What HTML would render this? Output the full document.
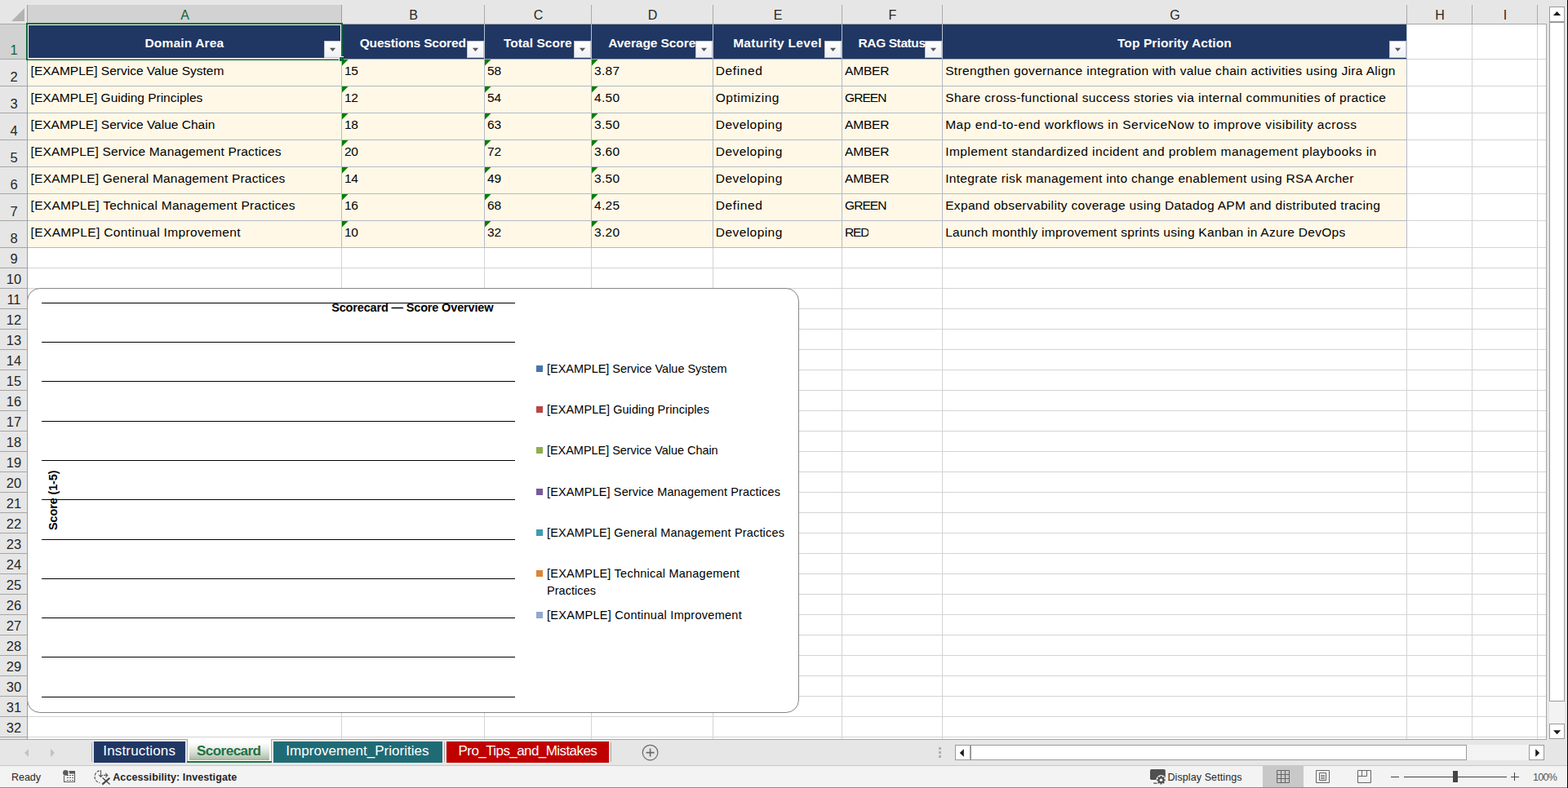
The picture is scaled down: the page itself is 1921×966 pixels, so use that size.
<!DOCTYPE html>
<html lang="en"><head><meta charset="utf-8"><title>Scorecard</title>
<style>
html,body{margin:0;padding:0;background:#E6E6E6}
body{width:1921px;height:966px;position:relative;overflow:hidden;font-family:"Liberation Sans", sans-serif}
div,svg{position:absolute;box-sizing:content-box}
.t{white-space:pre}
.fb{width:19px;height:19px;border:1px solid #C4C4C4;background:linear-gradient(#fff,#EEF0F5)}
.sb{width:17px;height:17px;border:1px solid #9A9A9A;background:#fff}
</style></head>
<body>
<div id="sheet" style="left:0;top:0">
<div style="left:0px;top:0px;width:1921px;height:966px;background:#E6E6E6;"></div>
<div style="left:34px;top:30px;width:1860px;height:876px;background:#fff;"></div>
<div style="left:418px;top:30px;width:1px;height:876px;background:#D4D4D4;"></div>
<div style="left:593px;top:30px;width:1px;height:876px;background:#D4D4D4;"></div>
<div style="left:724px;top:30px;width:1px;height:876px;background:#D4D4D4;"></div>
<div style="left:873px;top:30px;width:1px;height:876px;background:#D4D4D4;"></div>
<div style="left:1031px;top:30px;width:1px;height:876px;background:#D4D4D4;"></div>
<div style="left:1154px;top:30px;width:1px;height:876px;background:#D4D4D4;"></div>
<div style="left:1723px;top:30px;width:1px;height:876px;background:#D4D4D4;"></div>
<div style="left:1803px;top:30px;width:1px;height:876px;background:#D4D4D4;"></div>
<div style="left:1883px;top:30px;width:1px;height:876px;background:#D4D4D4;"></div>
<div style="left:34px;top:72px;width:1860px;height:1px;background:#D4D4D4;"></div>
<div style="left:34px;top:105px;width:1860px;height:1px;background:#D4D4D4;"></div>
<div style="left:34px;top:138px;width:1860px;height:1px;background:#D4D4D4;"></div>
<div style="left:34px;top:171px;width:1860px;height:1px;background:#D4D4D4;"></div>
<div style="left:34px;top:204px;width:1860px;height:1px;background:#D4D4D4;"></div>
<div style="left:34px;top:237px;width:1860px;height:1px;background:#D4D4D4;"></div>
<div style="left:34px;top:270px;width:1860px;height:1px;background:#D4D4D4;"></div>
<div style="left:34px;top:303px;width:1860px;height:1px;background:#D4D4D4;"></div>
<div style="left:34px;top:328px;width:1860px;height:1px;background:#D4D4D4;"></div>
<div style="left:34px;top:353px;width:1860px;height:1px;background:#D4D4D4;"></div>
<div style="left:34px;top:378px;width:1860px;height:1px;background:#D4D4D4;"></div>
<div style="left:34px;top:403px;width:1860px;height:1px;background:#D4D4D4;"></div>
<div style="left:34px;top:428px;width:1860px;height:1px;background:#D4D4D4;"></div>
<div style="left:34px;top:453px;width:1860px;height:1px;background:#D4D4D4;"></div>
<div style="left:34px;top:478px;width:1860px;height:1px;background:#D4D4D4;"></div>
<div style="left:34px;top:503px;width:1860px;height:1px;background:#D4D4D4;"></div>
<div style="left:34px;top:528px;width:1860px;height:1px;background:#D4D4D4;"></div>
<div style="left:34px;top:553px;width:1860px;height:1px;background:#D4D4D4;"></div>
<div style="left:34px;top:578px;width:1860px;height:1px;background:#D4D4D4;"></div>
<div style="left:34px;top:603px;width:1860px;height:1px;background:#D4D4D4;"></div>
<div style="left:34px;top:628px;width:1860px;height:1px;background:#D4D4D4;"></div>
<div style="left:34px;top:653px;width:1860px;height:1px;background:#D4D4D4;"></div>
<div style="left:34px;top:678px;width:1860px;height:1px;background:#D4D4D4;"></div>
<div style="left:34px;top:703px;width:1860px;height:1px;background:#D4D4D4;"></div>
<div style="left:34px;top:728px;width:1860px;height:1px;background:#D4D4D4;"></div>
<div style="left:34px;top:753px;width:1860px;height:1px;background:#D4D4D4;"></div>
<div style="left:34px;top:778px;width:1860px;height:1px;background:#D4D4D4;"></div>
<div style="left:34px;top:803px;width:1860px;height:1px;background:#D4D4D4;"></div>
<div style="left:34px;top:828px;width:1860px;height:1px;background:#D4D4D4;"></div>
<div style="left:34px;top:853px;width:1860px;height:1px;background:#D4D4D4;"></div>
<div style="left:34px;top:878px;width:1860px;height:1px;background:#D4D4D4;"></div>
<div style="left:34px;top:903px;width:1860px;height:1px;background:#D4D4D4;"></div>
<div style="left:34px;top:30px;width:1689px;height:42px;background:#203764;"></div>
<div style="left:34px;top:73px;width:1689px;height:230px;background:#FFF8E7;"></div>
<div style="left:418px;top:30px;width:1px;height:42px;background:#B9C0CE;"></div>
<div style="left:418px;top:72px;width:1px;height:232px;background:#B4BAC7;"></div>
<div style="left:593px;top:30px;width:1px;height:42px;background:#B9C0CE;"></div>
<div style="left:593px;top:72px;width:1px;height:232px;background:#B4BAC7;"></div>
<div style="left:724px;top:30px;width:1px;height:42px;background:#B9C0CE;"></div>
<div style="left:724px;top:72px;width:1px;height:232px;background:#B4BAC7;"></div>
<div style="left:873px;top:30px;width:1px;height:42px;background:#B9C0CE;"></div>
<div style="left:873px;top:72px;width:1px;height:232px;background:#B4BAC7;"></div>
<div style="left:1031px;top:30px;width:1px;height:42px;background:#B9C0CE;"></div>
<div style="left:1031px;top:72px;width:1px;height:232px;background:#B4BAC7;"></div>
<div style="left:1154px;top:30px;width:1px;height:42px;background:#B9C0CE;"></div>
<div style="left:1154px;top:72px;width:1px;height:232px;background:#B4BAC7;"></div>
<div style="left:1723px;top:30px;width:1px;height:42px;background:#B9C0CE;"></div>
<div style="left:1723px;top:72px;width:1px;height:232px;background:#B4BAC7;"></div>
<div style="left:34px;top:72px;width:1690px;height:1px;background:#A8A8A8;"></div>
<div style="left:34px;top:105px;width:1690px;height:1px;background:#B4BAC7;"></div>
<div style="left:34px;top:138px;width:1690px;height:1px;background:#B4BAC7;"></div>
<div style="left:34px;top:171px;width:1690px;height:1px;background:#B4BAC7;"></div>
<div style="left:34px;top:204px;width:1690px;height:1px;background:#B4BAC7;"></div>
<div style="left:34px;top:237px;width:1690px;height:1px;background:#B4BAC7;"></div>
<div style="left:34px;top:270px;width:1690px;height:1px;background:#B4BAC7;"></div>
<div style="left:34px;top:303px;width:1690px;height:1px;background:#B4BAC7;"></div>
<div style="left:34px;top:6px;width:384px;height:23px;background:#D2D2D2;"></div>
<div style="left:33px;top:6px;width:1px;height:23px;background:#9E9E9E;"></div>
<div style="left:418px;top:6px;width:1px;height:23px;background:#9E9E9E;"></div>
<div style="left:593px;top:6px;width:1px;height:23px;background:#ABABAB;"></div>
<div style="left:724px;top:6px;width:1px;height:23px;background:#ABABAB;"></div>
<div style="left:873px;top:6px;width:1px;height:23px;background:#ABABAB;"></div>
<div style="left:1031px;top:6px;width:1px;height:23px;background:#ABABAB;"></div>
<div style="left:1154px;top:6px;width:1px;height:23px;background:#ABABAB;"></div>
<div style="left:1723px;top:6px;width:1px;height:23px;background:#ABABAB;"></div>
<div style="left:1803px;top:6px;width:1px;height:23px;background:#ABABAB;"></div>
<div style="left:1883px;top:6px;width:1px;height:23px;background:#ABABAB;"></div>
<div style="left:0px;top:29px;width:1895px;height:1px;background:#A6A6A6;"></div>
<div style="left:0px;top:30px;width:33px;height:42px;background:#D2D2D2;"></div>
<div style="left:33px;top:30px;width:1px;height:876px;background:#9E9E9E;"></div>
<div style="left:0px;top:72px;width:33px;height:1px;background:#A6A6A6;"></div>
<div style="left:0px;top:105px;width:33px;height:1px;background:#A6A6A6;"></div>
<div style="left:0px;top:138px;width:33px;height:1px;background:#A6A6A6;"></div>
<div style="left:0px;top:171px;width:33px;height:1px;background:#A6A6A6;"></div>
<div style="left:0px;top:204px;width:33px;height:1px;background:#A6A6A6;"></div>
<div style="left:0px;top:237px;width:33px;height:1px;background:#A6A6A6;"></div>
<div style="left:0px;top:270px;width:33px;height:1px;background:#A6A6A6;"></div>
<div style="left:0px;top:303px;width:33px;height:1px;background:#A6A6A6;"></div>
<div style="left:0px;top:328px;width:33px;height:1px;background:#A6A6A6;"></div>
<div style="left:0px;top:353px;width:33px;height:1px;background:#A6A6A6;"></div>
<div style="left:0px;top:378px;width:33px;height:1px;background:#A6A6A6;"></div>
<div style="left:0px;top:403px;width:33px;height:1px;background:#A6A6A6;"></div>
<div style="left:0px;top:428px;width:33px;height:1px;background:#A6A6A6;"></div>
<div style="left:0px;top:453px;width:33px;height:1px;background:#A6A6A6;"></div>
<div style="left:0px;top:478px;width:33px;height:1px;background:#A6A6A6;"></div>
<div style="left:0px;top:503px;width:33px;height:1px;background:#A6A6A6;"></div>
<div style="left:0px;top:528px;width:33px;height:1px;background:#A6A6A6;"></div>
<div style="left:0px;top:553px;width:33px;height:1px;background:#A6A6A6;"></div>
<div style="left:0px;top:578px;width:33px;height:1px;background:#A6A6A6;"></div>
<div style="left:0px;top:603px;width:33px;height:1px;background:#A6A6A6;"></div>
<div style="left:0px;top:628px;width:33px;height:1px;background:#A6A6A6;"></div>
<div style="left:0px;top:653px;width:33px;height:1px;background:#A6A6A6;"></div>
<div style="left:0px;top:678px;width:33px;height:1px;background:#A6A6A6;"></div>
<div style="left:0px;top:703px;width:33px;height:1px;background:#A6A6A6;"></div>
<div style="left:0px;top:728px;width:33px;height:1px;background:#A6A6A6;"></div>
<div style="left:0px;top:753px;width:33px;height:1px;background:#A6A6A6;"></div>
<div style="left:0px;top:778px;width:33px;height:1px;background:#A6A6A6;"></div>
<div style="left:0px;top:803px;width:33px;height:1px;background:#A6A6A6;"></div>
<div style="left:0px;top:828px;width:33px;height:1px;background:#A6A6A6;"></div>
<div style="left:0px;top:853px;width:33px;height:1px;background:#A6A6A6;"></div>
<div style="left:0px;top:878px;width:33px;height:1px;background:#A6A6A6;"></div>
<div style="left:0px;top:903px;width:33px;height:1px;background:#A6A6A6;"></div>
<svg style="left:14px;top:10px" width="17" height="17"><path d="M16 0V16H0Z" fill="#B3B3B3"/></svg>
<div style="left:1894px;top:29px;width:1px;height:878px;background:#A6A6A6;"></div>
<div style="left:0px;top:906px;width:1895px;height:1px;background:#A6A6A6;"></div>
<div class="fb" style="left:397px;top:50px"><svg width="19" height="19" style="left:0;top:0"><path d="M5.900 7.800h7.200l-3.600 4.200z" fill="#555"/></svg></div>
<div class="fb" style="left:572px;top:50px"><svg width="19" height="19" style="left:0;top:0"><path d="M5.900 7.800h7.200l-3.600 4.200z" fill="#555"/></svg></div>
<div class="fb" style="left:703px;top:50px"><svg width="19" height="19" style="left:0;top:0"><path d="M5.900 7.800h7.200l-3.600 4.200z" fill="#555"/></svg></div>
<div class="fb" style="left:852px;top:50px"><svg width="19" height="19" style="left:0;top:0"><path d="M5.900 7.800h7.200l-3.600 4.200z" fill="#555"/></svg></div>
<div class="fb" style="left:1010px;top:50px"><svg width="19" height="19" style="left:0;top:0"><path d="M5.900 7.800h7.200l-3.600 4.200z" fill="#555"/></svg></div>
<div class="fb" style="left:1133px;top:50px"><svg width="19" height="19" style="left:0;top:0"><path d="M5.900 7.800h7.200l-3.600 4.200z" fill="#555"/></svg></div>
<div class="fb" style="left:1702px;top:50px"><svg width="19" height="19" style="left:0;top:0"><path d="M5.900 7.800h7.200l-3.600 4.200z" fill="#555"/></svg></div>
<svg style="left:419px;top:73px" width="8" height="8"><path d="M0 0H7.5L0 7.5Z" fill="#008000"/></svg>
<svg style="left:594px;top:73px" width="8" height="8"><path d="M0 0H7.5L0 7.5Z" fill="#008000"/></svg>
<svg style="left:725px;top:73px" width="8" height="8"><path d="M0 0H7.5L0 7.5Z" fill="#008000"/></svg>
<svg style="left:419px;top:106px" width="8" height="8"><path d="M0 0H7.5L0 7.5Z" fill="#008000"/></svg>
<svg style="left:594px;top:106px" width="8" height="8"><path d="M0 0H7.5L0 7.5Z" fill="#008000"/></svg>
<svg style="left:725px;top:106px" width="8" height="8"><path d="M0 0H7.5L0 7.5Z" fill="#008000"/></svg>
<svg style="left:419px;top:139px" width="8" height="8"><path d="M0 0H7.5L0 7.5Z" fill="#008000"/></svg>
<svg style="left:594px;top:139px" width="8" height="8"><path d="M0 0H7.5L0 7.5Z" fill="#008000"/></svg>
<svg style="left:725px;top:139px" width="8" height="8"><path d="M0 0H7.5L0 7.5Z" fill="#008000"/></svg>
<svg style="left:419px;top:172px" width="8" height="8"><path d="M0 0H7.5L0 7.5Z" fill="#008000"/></svg>
<svg style="left:594px;top:172px" width="8" height="8"><path d="M0 0H7.5L0 7.5Z" fill="#008000"/></svg>
<svg style="left:725px;top:172px" width="8" height="8"><path d="M0 0H7.5L0 7.5Z" fill="#008000"/></svg>
<svg style="left:419px;top:205px" width="8" height="8"><path d="M0 0H7.5L0 7.5Z" fill="#008000"/></svg>
<svg style="left:594px;top:205px" width="8" height="8"><path d="M0 0H7.5L0 7.5Z" fill="#008000"/></svg>
<svg style="left:725px;top:205px" width="8" height="8"><path d="M0 0H7.5L0 7.5Z" fill="#008000"/></svg>
<svg style="left:419px;top:238px" width="8" height="8"><path d="M0 0H7.5L0 7.5Z" fill="#008000"/></svg>
<svg style="left:594px;top:238px" width="8" height="8"><path d="M0 0H7.5L0 7.5Z" fill="#008000"/></svg>
<svg style="left:725px;top:238px" width="8" height="8"><path d="M0 0H7.5L0 7.5Z" fill="#008000"/></svg>
<svg style="left:419px;top:271px" width="8" height="8"><path d="M0 0H7.5L0 7.5Z" fill="#008000"/></svg>
<svg style="left:594px;top:271px" width="8" height="8"><path d="M0 0H7.5L0 7.5Z" fill="#008000"/></svg>
<svg style="left:725px;top:271px" width="8" height="8"><path d="M0 0H7.5L0 7.5Z" fill="#008000"/></svg>
<div style="left:32px;top:28px;width:384px;height:42px;border:2px solid #0E6B38;box-shadow:inset 0 0 0 1px #fff;"></div>
<div style="left:34px;top:72px;width:384px;height:1px;background:#A8A8A8;"></div>
<div style="left:415px;top:69px;width:6px;height:6px;background:#fff;"></div>
<div style="left:416px;top:70px;width:5px;height:5px;background:#0E6B38;"></div>
<div class="t" style="left:221.16px;top:8.00px;font-size:16px;line-height:21px;color:#0E6537;">A</div>
<div class="t" style="left:501.16px;top:8.00px;font-size:16px;line-height:21px;color:#262626;">B</div>
<div class="t" style="left:653.72px;top:8.00px;font-size:16px;line-height:21px;color:#262626;">C</div>
<div class="t" style="left:793.72px;top:8.00px;font-size:16px;line-height:21px;color:#262626;">D</div>
<div class="t" style="left:947.66px;top:8.00px;font-size:16px;line-height:21px;color:#262626;">E</div>
<div class="t" style="left:1088.61px;top:8.00px;font-size:16px;line-height:21px;color:#262626;">F</div>
<div class="t" style="left:1433.27px;top:8.00px;font-size:16px;line-height:21px;color:#262626;">G</div>
<div class="t" style="left:1758.22px;top:8.00px;font-size:16px;line-height:21px;color:#262626;">H</div>
<div class="t" style="left:1841.77px;top:8.00px;font-size:16px;line-height:21px;color:#262626;">I</div>
<div class="t" style="left:12.41px;top:50.50px;font-size:16.5px;line-height:21px;color:#0E6537;">1</div>
<div class="t" style="left:12.41px;top:83.50px;font-size:16.5px;line-height:21px;color:#262626;">2</div>
<div class="t" style="left:12.41px;top:116.50px;font-size:16.5px;line-height:21px;color:#262626;">3</div>
<div class="t" style="left:12.41px;top:149.50px;font-size:16.5px;line-height:21px;color:#262626;">4</div>
<div class="t" style="left:12.41px;top:182.50px;font-size:16.5px;line-height:21px;color:#262626;">5</div>
<div class="t" style="left:12.41px;top:215.50px;font-size:16.5px;line-height:21px;color:#262626;">6</div>
<div class="t" style="left:12.41px;top:248.50px;font-size:16.5px;line-height:21px;color:#262626;">7</div>
<div class="t" style="left:12.41px;top:281.50px;font-size:16.5px;line-height:21px;color:#262626;">8</div>
<div class="t" style="left:12.41px;top:306.50px;font-size:16.5px;line-height:21px;color:#262626;">9</div>
<div class="t" style="left:7.82px;top:331.50px;font-size:16.5px;line-height:21px;color:#262626;">10</div>
<div class="t" style="left:8.43px;top:356.50px;font-size:16.5px;line-height:21px;color:#262626;">11</div>
<div class="t" style="left:7.82px;top:381.50px;font-size:16.5px;line-height:21px;color:#262626;">12</div>
<div class="t" style="left:7.82px;top:406.50px;font-size:16.5px;line-height:21px;color:#262626;">13</div>
<div class="t" style="left:7.82px;top:431.50px;font-size:16.5px;line-height:21px;color:#262626;">14</div>
<div class="t" style="left:7.82px;top:456.50px;font-size:16.5px;line-height:21px;color:#262626;">15</div>
<div class="t" style="left:7.82px;top:481.50px;font-size:16.5px;line-height:21px;color:#262626;">16</div>
<div class="t" style="left:7.82px;top:506.50px;font-size:16.5px;line-height:21px;color:#262626;">17</div>
<div class="t" style="left:7.82px;top:531.50px;font-size:16.5px;line-height:21px;color:#262626;">18</div>
<div class="t" style="left:7.82px;top:556.50px;font-size:16.5px;line-height:21px;color:#262626;">19</div>
<div class="t" style="left:7.82px;top:581.50px;font-size:16.5px;line-height:21px;color:#262626;">20</div>
<div class="t" style="left:7.82px;top:606.50px;font-size:16.5px;line-height:21px;color:#262626;">21</div>
<div class="t" style="left:7.82px;top:631.50px;font-size:16.5px;line-height:21px;color:#262626;">22</div>
<div class="t" style="left:7.82px;top:656.50px;font-size:16.5px;line-height:21px;color:#262626;">23</div>
<div class="t" style="left:7.82px;top:681.50px;font-size:16.5px;line-height:21px;color:#262626;">24</div>
<div class="t" style="left:7.82px;top:706.50px;font-size:16.5px;line-height:21px;color:#262626;">25</div>
<div class="t" style="left:7.82px;top:731.50px;font-size:16.5px;line-height:21px;color:#262626;">26</div>
<div class="t" style="left:7.82px;top:756.50px;font-size:16.5px;line-height:21px;color:#262626;">27</div>
<div class="t" style="left:7.82px;top:781.50px;font-size:16.5px;line-height:21px;color:#262626;">28</div>
<div class="t" style="left:7.82px;top:806.50px;font-size:16.5px;line-height:21px;color:#262626;">29</div>
<div class="t" style="left:7.82px;top:831.50px;font-size:16.5px;line-height:21px;color:#262626;">30</div>
<div class="t" style="left:7.82px;top:856.50px;font-size:16.5px;line-height:21px;color:#262626;">31</div>
<div class="t" style="left:7.82px;top:881.50px;font-size:16.5px;line-height:21px;color:#262626;">32</div>
<div class="t" style="left:177.45px;top:42.50px;font-size:15.5px;line-height:20px;color:#fff;font-weight:700;letter-spacing:0.165px;">Domain Area</div>
<div class="t" style="left:440.70px;top:42.50px;font-size:15.5px;line-height:20px;color:#fff;font-weight:700;letter-spacing:-0.164px;">Questions Scored</div>
<div class="t" style="left:616.95px;top:42.50px;font-size:15.5px;line-height:20px;color:#fff;font-weight:700;letter-spacing:0.043px;">Total Score</div>
<div class="t" style="left:745.30px;top:42.50px;font-size:15.5px;line-height:20px;color:#fff;font-weight:700;letter-spacing:-0.083px;">Average Score</div>
<div class="t" style="left:898.15px;top:42.50px;font-size:15.5px;line-height:20px;color:#fff;font-weight:700;letter-spacing:0.313px;">Maturity Level</div>
<div class="t" style="left:1051.55px;top:42.50px;font-size:15.5px;line-height:20px;color:#fff;font-weight:700;letter-spacing:-0.403px;">RAG Status</div>
<div class="t" style="left:1368.90px;top:42.50px;font-size:15.5px;line-height:20px;color:#fff;font-weight:700;letter-spacing:0.112px;">Top Priority Action</div>
<div class="t" style="left:37.60px;top:76.50px;font-size:15.5px;line-height:20px;color:#000;letter-spacing:0.006px;max-width:379.4px;overflow:hidden;">[EXAMPLE] Service Value System</div>
<div class="t" style="left:422.00px;top:76.50px;font-size:15.5px;line-height:20px;color:#000;letter-spacing:-0.250px;max-width:170.0px;overflow:hidden;">15</div>
<div class="t" style="left:597.00px;top:76.50px;font-size:15.5px;line-height:20px;color:#000;letter-spacing:-0.050px;max-width:126.0px;overflow:hidden;">58</div>
<div class="t" style="left:728.00px;top:76.50px;font-size:15.5px;line-height:20px;color:#000;letter-spacing:0.276px;max-width:144.0px;overflow:hidden;">3.87</div>
<div class="t" style="left:876.80px;top:76.50px;font-size:15.5px;line-height:20px;color:#000;letter-spacing:0.594px;max-width:153.2px;overflow:hidden;">Defined</div>
<div class="t" style="left:1035.00px;top:76.50px;font-size:15.5px;line-height:20px;color:#000;letter-spacing:-0.156px;max-width:118.0px;overflow:hidden;">AMBER</div>
<div class="t" style="left:1158.20px;top:76.50px;font-size:15.5px;line-height:20px;color:#000;letter-spacing:0.345px;max-width:563.8px;overflow:hidden;">Strengthen governance integration with value chain activities using Jira Align</div>
<div class="t" style="left:37.60px;top:109.50px;font-size:15.5px;line-height:20px;color:#000;letter-spacing:-0.014px;max-width:379.4px;overflow:hidden;">[EXAMPLE] Guiding Principles</div>
<div class="t" style="left:422.00px;top:109.50px;font-size:15.5px;line-height:20px;color:#000;letter-spacing:-0.250px;max-width:170.0px;overflow:hidden;">12</div>
<div class="t" style="left:597.00px;top:109.50px;font-size:15.5px;line-height:20px;color:#000;letter-spacing:-0.050px;max-width:126.0px;overflow:hidden;">54</div>
<div class="t" style="left:728.00px;top:109.50px;font-size:15.5px;line-height:20px;color:#000;letter-spacing:0.276px;max-width:144.0px;overflow:hidden;">4.50</div>
<div class="t" style="left:876.80px;top:109.50px;font-size:15.5px;line-height:20px;color:#000;letter-spacing:0.487px;max-width:153.2px;overflow:hidden;">Optimizing</div>
<div class="t" style="left:1035.00px;top:109.50px;font-size:15.5px;line-height:20px;color:#000;letter-spacing:-0.906px;max-width:118.0px;overflow:hidden;">GREEN</div>
<div class="t" style="left:1158.20px;top:109.50px;font-size:15.5px;line-height:20px;color:#000;letter-spacing:0.391px;max-width:563.8px;overflow:hidden;">Share cross-functional success stories via internal communities of practice</div>
<div class="t" style="left:37.60px;top:142.50px;font-size:15.5px;line-height:20px;color:#000;letter-spacing:0.009px;max-width:379.4px;overflow:hidden;">[EXAMPLE] Service Value Chain</div>
<div class="t" style="left:422.00px;top:142.50px;font-size:15.5px;line-height:20px;color:#000;letter-spacing:-0.250px;max-width:170.0px;overflow:hidden;">18</div>
<div class="t" style="left:597.00px;top:142.50px;font-size:15.5px;line-height:20px;color:#000;letter-spacing:-0.050px;max-width:126.0px;overflow:hidden;">63</div>
<div class="t" style="left:728.00px;top:142.50px;font-size:15.5px;line-height:20px;color:#000;letter-spacing:0.276px;max-width:144.0px;overflow:hidden;">3.50</div>
<div class="t" style="left:876.80px;top:142.50px;font-size:15.5px;line-height:20px;color:#000;letter-spacing:0.438px;max-width:153.2px;overflow:hidden;">Developing</div>
<div class="t" style="left:1035.00px;top:142.50px;font-size:15.5px;line-height:20px;color:#000;letter-spacing:-0.156px;max-width:118.0px;overflow:hidden;">AMBER</div>
<div class="t" style="left:1158.20px;top:142.50px;font-size:15.5px;line-height:20px;color:#000;letter-spacing:0.521px;max-width:563.8px;overflow:hidden;">Map end-to-end workflows in ServiceNow to improve visibility across</div>
<div class="t" style="left:37.60px;top:175.50px;font-size:15.5px;line-height:20px;color:#000;letter-spacing:0.169px;max-width:379.4px;overflow:hidden;">[EXAMPLE] Service Management Practices</div>
<div class="t" style="left:422.00px;top:175.50px;font-size:15.5px;line-height:20px;color:#000;letter-spacing:-0.250px;max-width:170.0px;overflow:hidden;">20</div>
<div class="t" style="left:597.00px;top:175.50px;font-size:15.5px;line-height:20px;color:#000;letter-spacing:-0.050px;max-width:126.0px;overflow:hidden;">72</div>
<div class="t" style="left:728.00px;top:175.50px;font-size:15.5px;line-height:20px;color:#000;letter-spacing:0.276px;max-width:144.0px;overflow:hidden;">3.60</div>
<div class="t" style="left:876.80px;top:175.50px;font-size:15.5px;line-height:20px;color:#000;letter-spacing:0.438px;max-width:153.2px;overflow:hidden;">Developing</div>
<div class="t" style="left:1035.00px;top:175.50px;font-size:15.5px;line-height:20px;color:#000;letter-spacing:-0.156px;max-width:118.0px;overflow:hidden;">AMBER</div>
<div class="t" style="left:1158.20px;top:175.50px;font-size:15.5px;line-height:20px;color:#000;letter-spacing:0.441px;max-width:563.8px;overflow:hidden;">Implement standardized incident and problem management playbooks in</div>
<div class="t" style="left:37.60px;top:208.50px;font-size:15.5px;line-height:20px;color:#000;letter-spacing:0.205px;max-width:379.4px;overflow:hidden;">[EXAMPLE] General Management Practices</div>
<div class="t" style="left:422.00px;top:208.50px;font-size:15.5px;line-height:20px;color:#000;letter-spacing:-0.250px;max-width:170.0px;overflow:hidden;">14</div>
<div class="t" style="left:597.00px;top:208.50px;font-size:15.5px;line-height:20px;color:#000;letter-spacing:-0.050px;max-width:126.0px;overflow:hidden;">49</div>
<div class="t" style="left:728.00px;top:208.50px;font-size:15.5px;line-height:20px;color:#000;letter-spacing:0.276px;max-width:144.0px;overflow:hidden;">3.50</div>
<div class="t" style="left:876.80px;top:208.50px;font-size:15.5px;line-height:20px;color:#000;letter-spacing:0.438px;max-width:153.2px;overflow:hidden;">Developing</div>
<div class="t" style="left:1035.00px;top:208.50px;font-size:15.5px;line-height:20px;color:#000;letter-spacing:-0.156px;max-width:118.0px;overflow:hidden;">AMBER</div>
<div class="t" style="left:1158.20px;top:208.50px;font-size:15.5px;line-height:20px;color:#000;letter-spacing:0.318px;max-width:563.8px;overflow:hidden;">Integrate risk management into change enablement using RSA Archer</div>
<div class="t" style="left:37.60px;top:241.50px;font-size:15.5px;line-height:20px;color:#000;letter-spacing:0.269px;max-width:379.4px;overflow:hidden;">[EXAMPLE] Technical Management Practices</div>
<div class="t" style="left:422.00px;top:241.50px;font-size:15.5px;line-height:20px;color:#000;letter-spacing:-0.250px;max-width:170.0px;overflow:hidden;">16</div>
<div class="t" style="left:597.00px;top:241.50px;font-size:15.5px;line-height:20px;color:#000;letter-spacing:-0.050px;max-width:126.0px;overflow:hidden;">68</div>
<div class="t" style="left:728.00px;top:241.50px;font-size:15.5px;line-height:20px;color:#000;letter-spacing:0.276px;max-width:144.0px;overflow:hidden;">4.25</div>
<div class="t" style="left:876.80px;top:241.50px;font-size:15.5px;line-height:20px;color:#000;letter-spacing:0.594px;max-width:153.2px;overflow:hidden;">Defined</div>
<div class="t" style="left:1035.00px;top:241.50px;font-size:15.5px;line-height:20px;color:#000;letter-spacing:-0.906px;max-width:118.0px;overflow:hidden;">GREEN</div>
<div class="t" style="left:1158.20px;top:241.50px;font-size:15.5px;line-height:20px;color:#000;letter-spacing:0.334px;max-width:563.8px;overflow:hidden;">Expand observability coverage using Datadog APM and distributed tracing</div>
<div class="t" style="left:37.60px;top:274.50px;font-size:15.5px;line-height:20px;color:#000;letter-spacing:0.354px;max-width:379.4px;overflow:hidden;">[EXAMPLE] Continual Improvement</div>
<div class="t" style="left:422.00px;top:274.50px;font-size:15.5px;line-height:20px;color:#000;letter-spacing:-0.250px;max-width:170.0px;overflow:hidden;">10</div>
<div class="t" style="left:597.00px;top:274.50px;font-size:15.5px;line-height:20px;color:#000;letter-spacing:-0.050px;max-width:126.0px;overflow:hidden;">32</div>
<div class="t" style="left:728.00px;top:274.50px;font-size:15.5px;line-height:20px;color:#000;letter-spacing:0.276px;max-width:144.0px;overflow:hidden;">3.20</div>
<div class="t" style="left:876.80px;top:274.50px;font-size:15.5px;line-height:20px;color:#000;letter-spacing:0.438px;max-width:153.2px;overflow:hidden;">Developing</div>
<div class="t" style="left:1035.00px;top:274.50px;font-size:15.5px;line-height:20px;color:#000;letter-spacing:-1.117px;max-width:118.0px;overflow:hidden;">RED</div>
<div class="t" style="left:1158.20px;top:274.50px;font-size:15.5px;line-height:20px;color:#000;letter-spacing:0.274px;max-width:563.8px;overflow:hidden;">Launch monthly improvement sprints using Kanban in Azure DevOps</div>
</div>
<div id="chart" style="left:0;top:0">
<div style="left:33px;top:353px;width:944px;height:519px;border:1px solid #868686;border-radius:16px;background:#fff"></div>
<div style="left:33px;top:353px;width:1px;height:521px;background:#9E9E9E;"></div>
<div style="left:51px;top:371px;width:580px;height:1px;background:#000;"></div>
<div style="left:51px;top:419px;width:580px;height:1px;background:#000;"></div>
<div style="left:51px;top:467px;width:580px;height:1px;background:#000;"></div>
<div style="left:51px;top:516px;width:580px;height:1px;background:#000;"></div>
<div style="left:51px;top:564px;width:580px;height:1px;background:#000;"></div>
<div style="left:51px;top:612px;width:580px;height:1px;background:#000;"></div>
<div style="left:51px;top:661px;width:580px;height:1px;background:#000;"></div>
<div style="left:51px;top:709px;width:580px;height:1px;background:#000;"></div>
<div style="left:51px;top:757px;width:580px;height:1px;background:#000;"></div>
<div style="left:51px;top:805px;width:580px;height:1px;background:#000;"></div>
<div style="left:51px;top:854px;width:580px;height:1px;background:#000;"></div>
<div style="left:657px;top:448px;width:8px;height:8px;background:#4775AB;"></div>
<div style="left:657px;top:498px;width:8px;height:8px;background:#B84744;"></div>
<div style="left:657px;top:548px;width:8px;height:8px;background:#8FAE4F;"></div>
<div style="left:657px;top:599px;width:8px;height:8px;background:#775B9B;"></div>
<div style="left:657px;top:649px;width:8px;height:8px;background:#3F9AB3;"></div>
<div style="left:657px;top:699px;width:8px;height:8px;background:#DE8439;"></div>
<div style="left:657px;top:750px;width:8px;height:8px;background:#92A8CE;"></div>
<div class="t" style="left:406.20px;top:367.90px;font-size:14.5px;line-height:19px;color:#000;font-weight:700;letter-spacing:-0.160px;">Scorecard — Score Overview</div>
<div class="t" style="left:70.00px;top:649.60px;font-size:14.5px;line-height:19px;color:#000;font-weight:700;letter-spacing:-0.145px;transform-origin:0 0;transform:rotate(-90deg) translate(0,-14.50px);">Score (1-5)</div>
<div class="t" style="left:670.00px;top:442.50px;font-size:14.5px;line-height:19px;color:#000;letter-spacing:-0.023px;max-width:304.0px;overflow:hidden;">[EXAMPLE] Service Value System</div>
<div class="t" style="left:670.00px;top:492.50px;font-size:14.5px;line-height:19px;color:#000;letter-spacing:0.057px;max-width:304.0px;overflow:hidden;">[EXAMPLE] Guiding Principles</div>
<div class="t" style="left:670.00px;top:542.50px;font-size:14.5px;line-height:19px;color:#000;letter-spacing:-0.043px;max-width:304.0px;overflow:hidden;">[EXAMPLE] Service Value Chain</div>
<div class="t" style="left:670.00px;top:593.50px;font-size:14.5px;line-height:19px;color:#000;letter-spacing:0.125px;max-width:304.0px;overflow:hidden;">[EXAMPLE] Service Management Practices</div>
<div class="t" style="left:670.00px;top:643.50px;font-size:14.5px;line-height:19px;color:#000;letter-spacing:0.173px;max-width:304.0px;overflow:hidden;">[EXAMPLE] General Management Practices</div>
<div class="t" style="left:670.00px;top:693.50px;font-size:14.5px;line-height:19px;color:#000;letter-spacing:0.230px;max-width:304.0px;overflow:hidden;">[EXAMPLE] Technical Management</div>
<div class="t" style="left:670.00px;top:744.50px;font-size:14.5px;line-height:19px;color:#000;letter-spacing:0.273px;max-width:304.0px;overflow:hidden;">[EXAMPLE] Continual Improvement</div>
<div class="t" style="left:670.00px;top:714.50px;font-size:14.5px;line-height:19px;color:#000;letter-spacing:0.045px;">Practices</div>
</div>
<div id="vscroll" style="left:0;top:0">
<div style="left:1898px;top:8px;width:19px;height:898px;background:#F3F3F3;"></div>
<div class="sb" style="left:1898px;top:8px"><svg width="17" height="17" style="left:0;top:0"><path d="M3.900 10h9.200L8.500 5z" fill="#1A1A1A"/></svg></div>
<div class="sb" style="left:1898px;top:27px;height:831px"></div>
<div class="sb" style="left:1898px;top:887px"><svg width="17" height="17" style="left:0;top:0"><path d="M4 7.200h9.200L8.600 12.200z" fill="#1A1A1A"/></svg></div>
<div style="left:1920px;top:0px;width:1px;height:966px;background:#000;"></div>

</div>
<div id="tabbar" style="left:0;top:0">
<div style="left:0px;top:907px;width:1920px;height:31px;background:#E6E6E6;"></div>
<div style="left:0px;top:938px;width:1920px;height:1px;background:#C8C8C8;"></div>
<svg style="left:29px;top:917px" width="8" height="12"><path d="M6 1V11L1 6Z" fill="#C2C2C2"/></svg>
<svg style="left:61px;top:917px" width="8" height="12"><path d="M1 1V11L6 6Z" fill="#C2C2C2"/></svg>
<div style="left:112px;top:910px;width:1px;height:24px;background:#ABABAB;"></div>
<div style="left:115px;top:909px;width:112px;height:26px;background:#203764;"></div>
<div style="left:229px;top:906px;width:102px;height:28px;border-left:1px solid #ABABAB;border-right:1px solid #ABABAB;background:#fff"></div>
<div style="left:232px;top:910px;width:98px;height:22px;background:linear-gradient(#fff 0,#F1F3EF 25%,#DCE2D8 50%,#C4CEBF 75%,#A2B39A 100%)"></div>
<div style="left:229px;top:933px;width:104px;height:2px;background:#1E7145;"></div>
<div style="left:335px;top:909px;width:207px;height:26px;background:#1F6B75;"></div>
<div style="left:544px;top:910px;width:1px;height:24px;background:#ABABAB;"></div>
<div style="left:547px;top:909px;width:199px;height:26px;background:#C00000;"></div>
<div style="left:748px;top:910px;width:1px;height:24px;background:#ABABAB;"></div>
<svg style="left:786px;top:912px" width="22" height="22"><circle cx="10.6" cy="10.6" r="9.3" fill="none" stroke="#6A6A6A" stroke-width="1.2"/><path d="M5.6 10.6h10M10.6 5.6v10" stroke="#6A6A6A" stroke-width="1.6"/></svg>
<div style="left:1150px;top:916px;width:3px;height:3px;background:#B0B0B0;"></div>
<div style="left:1150px;top:921px;width:3px;height:3px;background:#B0B0B0;"></div>
<div style="left:1150px;top:926px;width:3px;height:3px;background:#B0B0B0;"></div>
<div style="left:1170px;top:913px;width:722px;height:19px;background:#F3F3F3;"></div>
<div class="sb" style="left:1170px;top:913px"><svg width="17" height="17" style="left:0;top:0"><path d="M9.800 4.300v9.400L4.800 9z" fill="#1A1A1A"/></svg></div>
<div class="sb" style="left:1189px;top:913px;width:606px"></div>
<div class="sb" style="left:1873px;top:913px"><svg width="17" height="17" style="left:0;top:0"><path d="M7.200 4.300v9.400L12.200 9z" fill="#1A1A1A"/></svg></div>
<div class="t" style="left:126.30px;top:910.10px;font-size:17px;line-height:22px;color:#fff;letter-spacing:0.160px;">Instructions</div>
<div class="t" style="left:241.00px;top:910.00px;font-size:17px;line-height:22px;color:#1E7145;font-weight:700;letter-spacing:-0.521px;">Scorecard</div>
<div class="t" style="left:350.30px;top:910.10px;font-size:17px;line-height:22px;color:#fff;letter-spacing:0.025px;">Improvement_Priorities</div>
<div class="t" style="left:561.60px;top:910.10px;font-size:17px;line-height:22px;color:#fff;letter-spacing:-0.578px;">Pro_Tips_and_Mistakes</div>
</div>
<div id="statusbar" style="left:0;top:0">
<div style="left:0px;top:939px;width:1920px;height:26px;background:#F3F3F3;"></div>
<div style="left:0px;top:965px;width:1920px;height:1px;background:#8C8C8C;"></div>
<svg style="left:77px;top:943px" width="17" height="17"><rect x="1.5" y="2.5" width="13" height="13" fill="#fff" stroke="#5A5A5A"/><rect x="8" y="2" width="7" height="3.600" fill="#5A5A5A"/><circle cx="3.400" cy="4.400" r="4.400" fill="#F3F3F3"/><circle cx="3.400" cy="4.400" r="3.300" fill="#5A5A5A"/><path d="M4.800 7.500h2.200M7.900 7.500h2.200M11 7.500h2.200M4.800 10.500h2.200M7.900 10.500h2.200M11 10.500h2.200M4.800 13.500h2.200M7.900 13.500h2.200M11 13.500h2.200" stroke="#5A5A5A" stroke-width="1"/><rect x="1" y="8" width="1" height="7.500" fill="#5A5A5A"/></svg>
<svg style="left:115px;top:943px" width="22" height="20"><path d="M6.800 1.900A7.500 7.500 0 0 0 7.300 16.600" fill="none" stroke="#5A5A5A" stroke-width="1.200" stroke-dasharray="3.300 1.500"/><path d="M8.500 1v8M6.200 7L8.500 9.400 10.800 7M12 7.400h4.600M14.400 5l2.400 2.400-2.400 2.400" fill="none" stroke="#5A5A5A" stroke-width="1.100"/><path d="M10.600 10.600L19.600 18.500" stroke="#444" stroke-width="1.300"/><path d="M19.400 10.700L10.300 18.600" stroke="#444" stroke-width="2.100"/></svg>
<svg style="left:1409px;top:943px" width="20" height="20"><rect x="0" y="0" width="18.800" height="13" rx="1.800" fill="#505050"/><rect x="4.200" y="16.500" width="4.600" height="1.300" fill="#505050"/><circle cx="13.500" cy="13.300" r="6.200" fill="#F3F3F3"/><path d="M17.22 12.13L18.70 12.27L18.70 14.33L17.22 14.47L16.96 15.10L17.90 16.25L16.45 17.70L15.30 16.76L14.67 17.02L14.53 18.50L12.47 18.50L12.33 17.02L11.70 16.76L10.55 17.70L9.10 16.25L10.04 15.10L9.78 14.47L8.30 14.33L8.30 12.27L9.78 12.13L10.04 11.50L9.10 10.35L10.55 8.90L11.70 9.84L12.33 9.58L12.47 8.10L14.53 8.10L14.67 9.58L15.30 9.84L16.45 8.90L17.90 10.35L16.96 11.50Z" fill="#505050"/><circle cx="13.500" cy="13.300" r="1.800" fill="#fff"/></svg>
<div style="left:1547px;top:939px;width:50px;height:26px;background:#C8C8C8;"></div>
<svg style="left:1564px;top:944px" width="17" height="17"><path d="M.5.5h15v15h-15zM5.500.5v15M10.500.5v15M.5 5.500h15M.5 10.500h15" fill="none" stroke="#666"/></svg>
<svg style="left:1612px;top:944px" width="18" height="17"><path d="M.5.5h16v15h-16z" fill="none" stroke="#666"/><path d="M4.500 3.500h8v9h-8z" fill="none" stroke="#666"/><path d="M6 6.500h5M6 8.500h5M6 10.500h5" stroke="#666"/></svg>
<svg style="left:1663px;top:944px" width="18" height="17"><path d="M.5.5h16v15h-16z" fill="none" stroke="#666"/><path d="M5.500.5v7M11.500.5v7M.5 7.500h11" fill="none" stroke="#666"/></svg>
<div style="left:1704px;top:952px;width:10px;height:1px;background:#444;"></div>
<div style="left:1720px;top:952px;width:126px;height:1px;background:#444;"></div>
<div style="left:1780px;top:945px;width:6px;height:14px;background:#444;"></div>
<div style="left:1851px;top:952px;width:10px;height:1px;background:#444;"></div>
<div style="left:1855px;top:947px;width:1px;height:10px;background:#444;"></div>
<div class="t" style="left:14.00px;top:945.00px;font-size:12.5px;line-height:16px;color:#262626;letter-spacing:-0.035px;">Ready</div>
<div class="t" style="left:138.20px;top:945.00px;font-size:12.5px;line-height:16px;color:#262626;font-weight:700;letter-spacing:0.105px;">Accessibility: Investigate</div>
<div class="t" style="left:1430.50px;top:945.00px;font-size:12.5px;line-height:16px;color:#262626;letter-spacing:0.092px;">Display Settings</div>
<div class="t" style="left:1878.00px;top:945.00px;font-size:12.5px;line-height:16px;color:#555;letter-spacing:-0.661px;">100%</div>
</div>
</body></html>
